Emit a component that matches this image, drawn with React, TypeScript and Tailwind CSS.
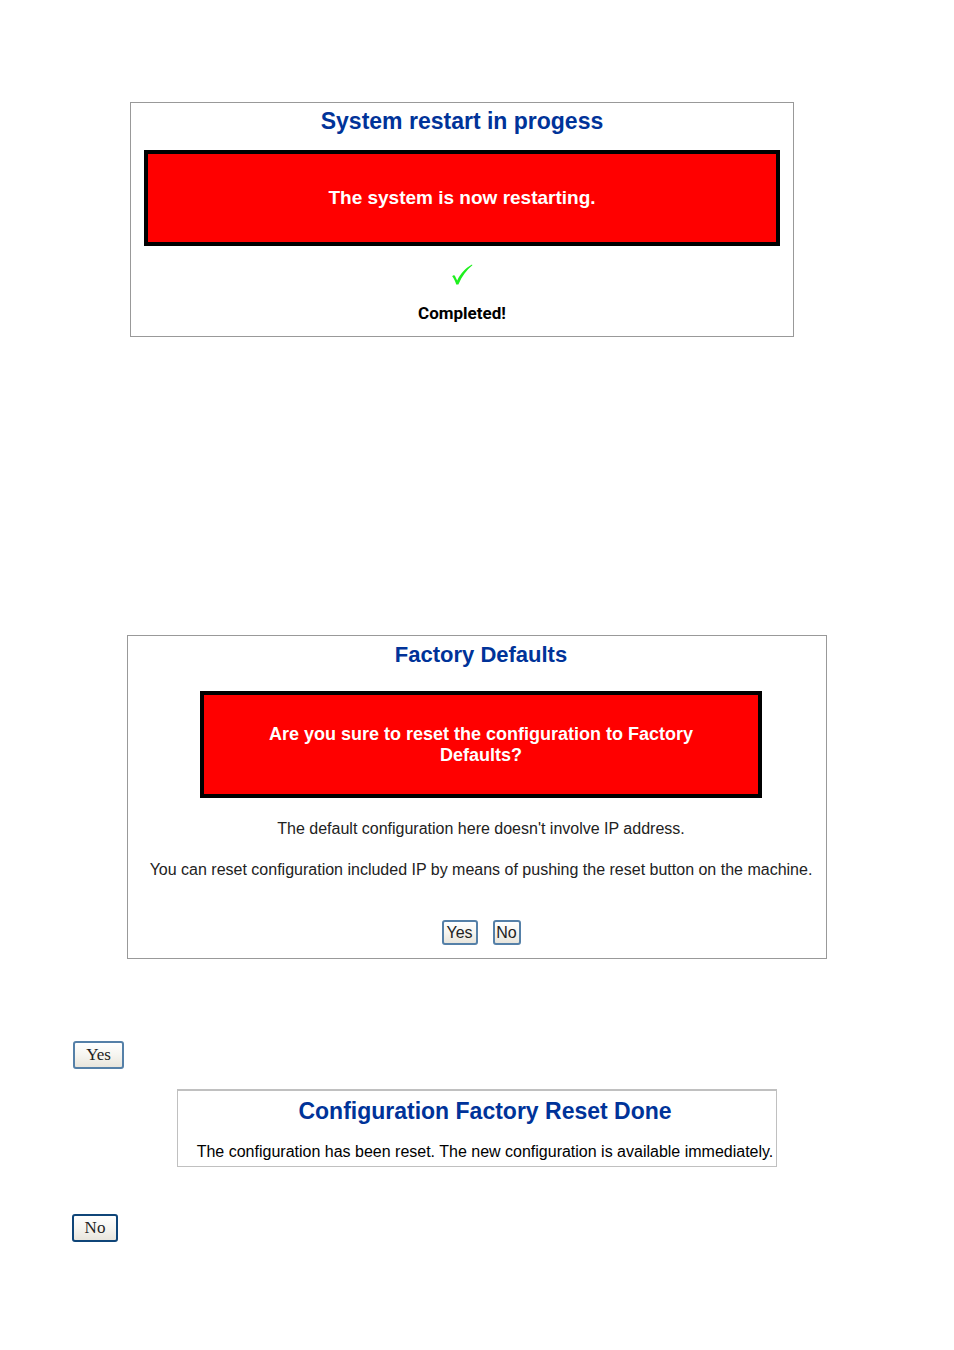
import { clsx } from 'clsx'
import React from 'react'

function PanelTitle({ children, className }: { children: React.ReactNode; className?: string }) {
  return <h2 className={clsx('text-center font-bold text-[#003399]', className)}>{children}</h2>
}

function Alert({ children, className }: { children: React.ReactNode; className?: string }) {
  return (
    <div
      className={clsx(
        'flex items-center justify-center border-4 border-black bg-[#ff0000] text-center font-bold text-white',
        className
      )}
      role="alert"
    >
      {children}
    </div>
  )
}

function XpButton({ children, className }: { children: React.ReactNode; className?: string }) {
  return (
    <button
      className={clsx(
        'rounded-[3px] border-2 bg-linear-to-b from-white via-[#f6f5f0] to-[#e8e5dc] text-[#222222]',
        className
      )}
      type="button"
    >
      {children}
    </button>
  )
}

function CheckMark() {
  return (
    <svg aria-hidden="true" className="mx-auto" fill="none" height="22" viewBox="0 0 22 22" width="22">
      <path
        d="M1.2 12.2C2.6 10.6 3.8 11 4.5 13L6.2 16.4C9.6 9.6 14.4 4 21 0.6L21.4 1.2C15.6 5.8 11 12 7.4 20.4H5.2C4.2 17 3 14.4 1.2 12.2Z"
        fill="#1ef01e"
      />
    </svg>
  )
}

export default function App() {
  return (
    <main className="flex min-h-screen flex-col bg-white pt-[102px] pb-[108px] font-['Liberation_Sans',Arial,sans-serif] text-black">
      <section className="mr-40 ml-[130px] border border-[#999999] px-[13px] pt-[3px] pb-[13px]">
        <PanelTitle className="text-[23px] leading-[30px]">System restart in progess</PanelTitle>
        <Alert className="mt-[14px] h-24 text-[19px]">The system is now restarting.</Alert>
        <div className="mt-[18px]">
          <CheckMark />
        </div>
        <p className="mt-[17px] text-center font-['Roboto',sans-serif] text-[17px] leading-5 font-bold">Completed!</p>
      </section>

      <section className="mx-[127px] mt-[298px] border border-[#999999] pt-1 pb-[13px] pl-2">
        <PanelTitle className="text-[22px] leading-[30px]">Factory Defaults</PanelTitle>
        <Alert className="mx-16 mt-[21px] h-[107px] px-12 text-lg leading-[21px]">
          Are you sure to reset the configuration to Factory Defaults?
        </Alert>
        <p className="mt-[21px] text-center text-base leading-5 text-[#222222]">
          The default configuration here doesn't involve IP address.
        </p>
        <p className="mt-[21px] text-center text-base leading-5 text-[#222222]">
          You can reset configuration included IP by means of pushing the reset button on the machine.
        </p>
        <div className="mt-10 flex justify-center gap-[15px]">
          <XpButton className="h-[25px] w-9 border-[#5580a8] text-base leading-5">Yes</XpButton>
          <XpButton className="h-[25px] w-7 border-[#5580a8] text-base leading-5">No</XpButton>
        </div>
      </section>

      <XpButton className="mt-[82px] ml-[73px] h-7 w-[51px] self-start border-[#5580a8] font-['Liberation_Serif',serif] text-[17px] leading-5">
        Yes
      </XpButton>

      <section className="mx-[177px] mt-5 border border-t-2 border-[#c0c0c0] pt-[5px] pb-1 pl-4">
        <PanelTitle className="text-[23px] leading-[30px]">Configuration Factory Reset Done</PanelTitle>
        <p className="mt-4 text-center text-base leading-5">
          The configuration has been reset. The new configuration is available immediately.
        </p>
      </section>

      <XpButton className="mt-[47px] ml-[72px] h-7 w-[46px] self-start border-[#0f4578] font-['Liberation_Serif',serif] text-[17px] leading-5">
        No
      </XpButton>
    </main>
  )
}
